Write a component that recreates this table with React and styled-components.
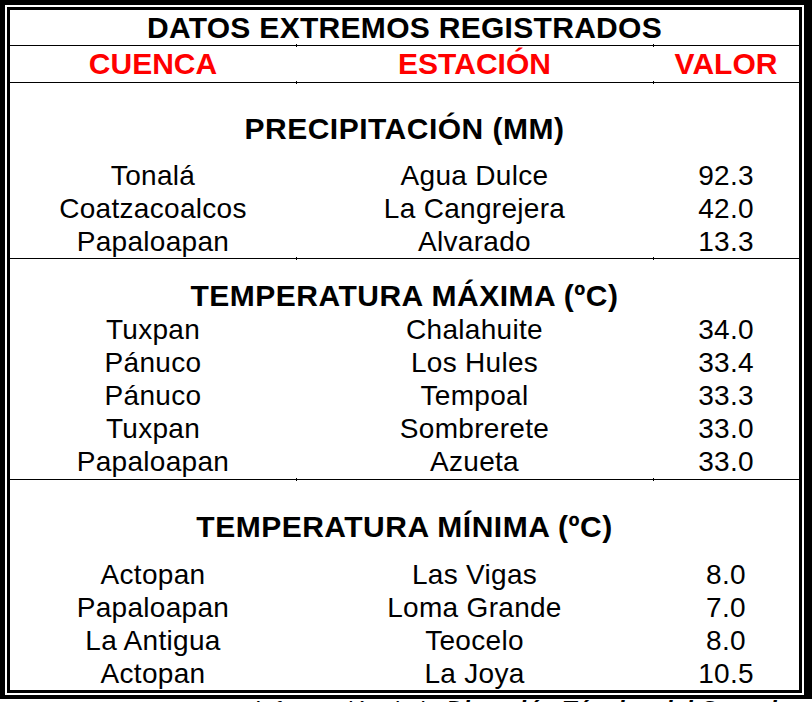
import styled, {createGlobalStyle} from 'styled-components'

const GlobalStyle = createGlobalStyle`
  body {
    margin: 0;
    background: #ffffff;
    font-family: "Liberation Sans", Arial, sans-serif;
  }
`

const Frame = styled.div`
  width: 812px;
  box-sizing: border-box;
  border-style: solid;
  border-color: #000000;
  border-width: 5px 8px 4px 5px;
  padding: 2px;
  background: #ffffff;
`

const Inner = styled.div`
  border: 3px solid #000000;
  display: flex;
  flex-direction: column;
  height: 680px;
`

const TitleRow = styled.div`
  height: 35px;
  display: flex;
  align-items: center;
  justify-content: center;
  font-size: 30px;
  font-weight: bold;
  letter-spacing: 0.3px;
  color: #000000;
`

const Rule = styled.div`
  position: relative;
  height: 1px;
  background: #000000;

  &::before,
  &::after {
    content: '';
    position: absolute;
    top: -1px;
    width: 1px;
    height: 3px;
    background: #000000;
  }
  &::before {
    left: 286px;
  }
  &::after {
    left: 643px;
  }
`

const Grid = styled.div`
  display: grid;
  grid-template-columns: 286px 357px 1fr;
  align-items: center;
  text-align: center;
`

const HeaderRow = styled(Grid)`
  height: 36px;
  font-size: 30px;
  font-weight: bold;
  color: #ff0000;
`

const Section = styled.div`
  display: flex;
  flex-direction: column;
  height: ${({$height}) => $height}px;
  padding-top: ${({$padTop}) => $padTop}px;
  box-sizing: border-box;
`

const SectionTitle = styled.div`
  height: ${({$height}) => $height}px;
  line-height: ${({$height}) => $height}px;
  margin-bottom: ${({$gap}) => $gap}px;
  text-align: center;
  font-size: 30px;
  font-weight: bold;
  letter-spacing: 0.5px;
  color: #000000;
`

const DataRow = styled(Grid)`
  height: 33px;
  line-height: 33px;
  font-size: 28px;
  letter-spacing: 0.3px;
  color: #000000;
`

const Caption = styled.div`
  padding-left: 255px;
  font-size: 24px;
  line-height: 28px;
  margin-top: -3px;
  color: #000000;
  white-space: nowrap;

  & > b {
    font-style: italic;
  }
`

const sections = [
  {
    title: 'PRECIPITACIÓN (MM)',
    height: 175,
    padTop: 29,
    titleHeight: 34,
    gap: 13,
    rows: [
      ['Tonalá', 'Agua Dulce', '92.3'],
      ['Coatzacoalcos', 'La Cangrejera', '42.0'],
      ['Papaloapan', 'Alvarado', '13.3'],
    ],
  },
  {
    title: 'TEMPERATURA MÁXIMA (ºC)',
    height: 220,
    padTop: 19,
    titleHeight: 35,
    gap: 0,
    rows: [
      ['Tuxpan', 'Chalahuite', '34.0'],
      ['Pánuco', 'Los Hules', '33.4'],
      ['Pánuco', 'Tempoal', '33.3'],
      ['Tuxpan', 'Sombrerete', '33.0'],
      ['Papaloapan', 'Azueta', '33.0'],
    ],
  },
  {
    title: 'TEMPERATURA MÍNIMA (ºC)',
    height: 210,
    padTop: 30,
    titleHeight: 34,
    gap: 14,
    rows: [
      ['Actopan', 'Las Vigas', '8.0'],
      ['Papaloapan', 'Loma Grande', '7.0'],
      ['La Antigua', 'Teocelo', '8.0'],
      ['Actopan', 'La Joya', '10.5'],
    ],
  },
]

function App() {
  return (
    <>
      <GlobalStyle/>
      <Frame>
        <Inner>
          <TitleRow>DATOS EXTREMOS REGISTRADOS</TitleRow>
          <Rule/>
          <HeaderRow>
            <span>CUENCA</span>
            <span>ESTACIÓN</span>
            <span>VALOR</span>
          </HeaderRow>
          <Rule/>
          {sections.map((section, index) => (
            <div key={section.title}>
              {index > 0 && <Rule/>}
              <Section $height={section.height} $padTop={section.padTop}>
                <SectionTitle $height={section.titleHeight} $gap={section.gap}>
                  {section.title}
                </SectionTitle>
                {section.rows.map((row, i) => (
                  <DataRow key={i}>
                    <span>{row[0]}</span>
                    <span>{row[1]}</span>
                    <span>{row[2]}</span>
                  </DataRow>
                ))}
              </Section>
            </div>
          ))}
        </Inner>
      </Frame>
      <Caption>
        Información de la <b>Dirección Técnica del Organismo de Cuenca</b>
      </Caption>
    </>
  )
}

export default App
